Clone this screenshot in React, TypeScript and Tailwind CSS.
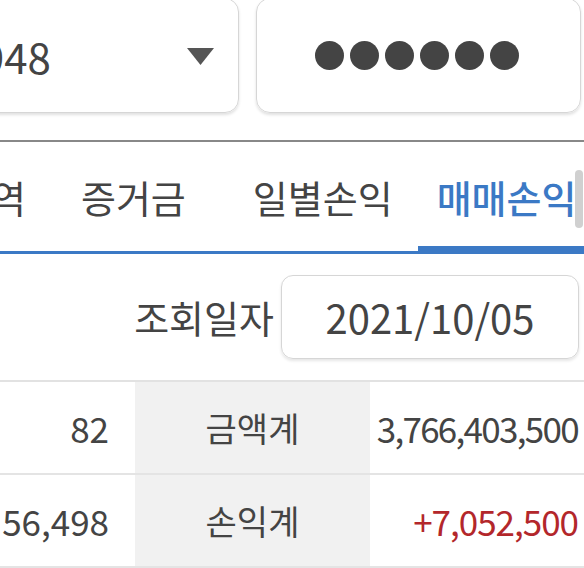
export default function App() {
  const tabs = [
    { label: "내역", active: false, cls: "ml-[-44px]" },
    { label: "증거금", active: false, cls: "ml-[55px]" },
    { label: "일별손익", active: false, cls: "ml-[67px]" },
    { label: "매매손익", active: true, cls: "ml-[25px] pl-[19px] pr-[40px]" },
  ];

  return (
    <div className="relative w-[584px] h-[568px] overflow-hidden bg-white text-[#444] font-['Noto_Sans_CJK_KR','Noto_Sans',sans-serif]">
      {/* account + password */}
      <div className="flex gap-[17px] mt-[-2px] h-[115px] pr-[3px]">
        <div className="ml-[-70px] w-[309px] shrink-0 flex items-center justify-between pl-[50px] pr-[24px] rounded-[14px] border-[1.5px] border-[#d6d6d6] shadow-[0_2px_3px_rgba(0,0,0,0.12)]">
          <span className="text-[42px] leading-none">948</span>
          <svg width="27" height="17" viewBox="0 0 27 17" className="mt-[2px]">
            <path d="M0 0 H27 L13.5 17 Z" fill="#555" />
          </svg>
        </div>
        <div className="flex-1 flex items-center justify-center gap-[6px] pr-[3px] rounded-[14px] border-[1.5px] border-[#d6d6d6] shadow-[0_2px_3px_rgba(0,0,0,0.12)]">
          {[0, 1, 2, 3, 4, 5].map((i) => (
            <span key={i} className="w-[29px] h-[29px] rounded-full bg-[#444]" />
          ))}
        </div>
      </div>

      <div className="mt-[27px] h-[2px] bg-[#888]" />

      {/* tabs */}
      <div className="relative flex h-[112px] border-b-[3px] border-[#3b79c5]">
        {tabs.map((t) => (
          <div
            key={t.label}
            className={
              "shrink-0 flex items-center whitespace-nowrap text-[38px] leading-none " +
              t.cls +
              (t.active ? " text-[#3b79c5] font-medium border-b-[5px] border-[#3b79c5] pt-[5px]" : "")
            }
          >
            {t.label}
          </div>
        ))}
        <div className="absolute right-[1px] top-[28px] w-[8px] h-[58px] rounded-full bg-[#c4c4c4]/80" />
      </div>

      {/* date */}
      <div className="flex h-[126px] items-center justify-end pr-[5px]">
        <span className="text-[38px] leading-none">조회일자</span>
        <div className="ml-[7px] w-[298px] h-[84px] flex items-center justify-center rounded-[12px] border-[1.5px] border-[#d6d6d6] shadow-[0_2px_3px_rgba(0,0,0,0.1)]">
          <span className="text-[40px] leading-none">2021/10/05</span>
        </div>
      </div>

      {/* summary table */}
      <div className="border-t-[2px] border-[#e2e2e2]">
        {[
          { a: "82", label: "금액계", b: "3,766,403,500", red: false },
          { a: "56,498", label: "손익계", b: "+7,052,500", red: true },
        ].map((r) => (
          <div key={r.label} className="grid grid-cols-[135px_235px_1fr] h-[93px] border-b-[2px] border-[#e4e4e4]">
            <div className="flex items-center justify-end pr-[26px] text-[35px] leading-none">{r.a}</div>
            <div className="flex items-center justify-center bg-[#f1f1f1] text-[34px] leading-none">{r.label}</div>
            <div
              className={
                "flex items-center justify-end pr-[6px] text-[35px] leading-none whitespace-nowrap " +
                (r.red ? "text-[#b3272b] tracking-[-1px]" : "tracking-[-1.7px]")
              }
            >
              {r.b}
            </div>
          </div>
        ))}
      </div>
    </div>
  );
}
